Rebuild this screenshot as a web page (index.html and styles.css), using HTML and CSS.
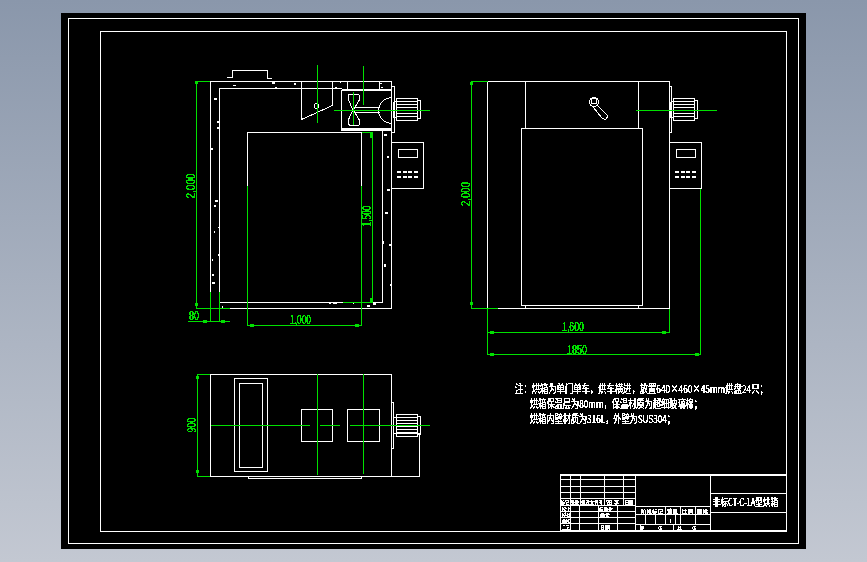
FILE: index.html
```html
<!DOCTYPE html>
<html lang="zh">
<head>
<meta charset="utf-8">
<title>CAD drawing</title>
<link rel="stylesheet" href="styles.css">
</head>
<body>
<main class="sheet">
<svg class="cad" viewBox="61 13 745 536" width="745" height="536" xmlns="http://www.w3.org/2000/svg">
  <defs>
    <filter id="alias" filterUnits="userSpaceOnUse" x="61" y="13" width="745" height="536">
      <feComponentTransfer><feFuncA type="discrete" tableValues="0 1 1 1"/></feComponentTransfer>
    </filter>
    <g id="motor">
      <path d="M.5 .5H21.5V22.5H.5ZM21.5 2.5H24V20.5H21.5ZM.5 3.5H21.5M.5 6.5H21.5M.5 9.5H21.5M.5 12.5H21.5M.5 15.5H21.5M.5 18.5H21.5M-2.5 3.5H.5M-2.5 19.5H.5M-2.5 3.5V19.5"/>
    </g>
    <g id="panel">
      <path d="M.5 .5H32V46.5H.5ZM7 7.5H26V15.5H7Z"/>
      <path class="keys" d="M6 30H10M11.5 30H15.5M17 30H21M22.5 30H26.5M6 35H10M11.5 35H15.5M17 35H21M22.5 35H26.5"/>
    </g>
  </defs>

  <!-- sheet frames -->
  <path class="w" d="M68.5 18.5H798.5V543.5H68.5ZM100.5 31.5H786.5V531.5H100.5Z"/>

  <!-- front section -->
  <g class="w">
    <path d="M227 77.5H232.5V70.5H267.5V78.5H272"/>
    <path d="M210.5 81.5H391.5V308.5H210.5Z"/>
    <path d="M341.5 88.5H219.5V302.5H382.5V130.5"/>
    <path d="M247.5 186V132.5H361.5V186"/>
    <path d="M301.5 81.5V119.5L332.5 105.5V81.5M347.5 81.5V89M379.5 81.5V89"/>
    <circle cx="316.5" cy="106" r="2.5"/>
    <path d="M341.5 89.5V130.5H391.5"/>
    <path class="thick" d="M341.5 89.5H391M341.5 128.5H391"/>
    <path d="M353 110C350 103 347 99 348.5 95Q349 94 351 94H358Q360 95 360 98C359 102 356 105 353 110C350 116 347 120 348.5 124Q349 125.500 351 125.500H358Q360 125 360 122C359 118 356 115 353 110ZM353 107.500H379.500M353 112.500H379.500"/>
    <path d="M392.500 97.500A14 13 0 0 0 392.500 123.500"/>
    <path d="M391.500 86.500H394V132H391.500"/>
    <use href="#motor" x="396" y="98"/>
    <use href="#panel" x="391" y="142"/>
    <path class="dots" d="M272 83h3M233 85.500h3M294 84h2M275 87.500h2M340 82h1M335 87.500h2M380 83.500h2M381 87.500h2M214 99h3M218 121v2M218 127v2M212 148v2M384 135h3M388 156v2M388 190h2M215 201h3M214 206h2M387 190h2M385 213h3M218 227.500h2M214 232h1M383 241v3M389 245h2M218 255h2M212 260h1M385 264v3M212 275h2M212 283h3M390 285h1M329 303h2M333 303h4M353 303h1M373 304h3M367 306h3M222 307h1"/>
  </g>

  <!-- side elevation -->
  <g class="w">
    <path d="M487.500 81.500H669.500V308.500H487.500Z"/>
    <path d="M525.500 81.500V128.500M638.500 81.500V128.500M525.500 305.500V308.500M638.500 305.500V308.500"/>
    <path d="M521.500 128.500H642.500V305.500H521.500Z"/>
    <circle cx="594" cy="102" r="4.500"/>
    <circle cx="594" cy="101" r="3"/>
    <path d="M597 105L607 115Q608 118 605 119.500L602 118L593 107"/>
    <path d="M670 86.500H671.500V132H670"/>
    <use href="#motor" x="673" y="98"/>
    <use href="#panel" x="669" y="142"/>
  </g>

  <!-- plan -->
  <g class="w">
    <path d="M210.500 374.500H391.500V476.500H210.500Z"/>
    <path d="M234.500 378.500H267.500V471.500H234.500ZM239.500 383.500H262.500V467.500H239.500Z"/>
    <path d="M301.500 409.500H332.500V441.500H301.500ZM347.500 409.500H379.500V441.500H347.500Z"/>
    <path d="M248.500 476.500V478.500H361.500V476.500"/>
    <path d="M391.500 402.500H393.500V448.500H391.500"/>
    <use href="#motor" x="396" y="414"/>
    <path d="M393.500 433.500H419.500V476.500H391.500"/>
  </g>

  <!-- green centre lines and dimensions -->
  <g class="g">
    <path d="M317.500 65V123M363.500 66V105M334 110.500H430M353.500 92V125"/>
    <path d="M247.500 186V325.500M361.500 186V325.500M247.500 325.500H361.500"/>
    <path d="M361.500 132.500H372.500V302.500H343"/>
    <path d="M210 81.500H196.500V308.500H230"/>
    <path d="M188 321.500H230M210.500 292V321.500M219.500 292V321.500"/>
    <path d="M487.500 81.500H471.500V308.500H498"/>
    <path d="M487.500 308.500V354.500H700.500V188.500M487.500 332.500H669.500V308.500"/>
    <path d="M636 110.500H717"/>
    <path d="M210 374.500H197.500V476.500H210"/>
    <path d="M210.500 425.500H310M320 425.500H340M350 425.500H430M317.500 374V475M363.500 374V474"/>
    <path class="ticks" d="M195 82.500h3M195 304.500h3M371 133v5M371 298v4M250 325.500h4M355 325.500h4M203 321.500h4M221 321.500h4M470 83h3M470 303h3M490 332.500h4M662 332.500h4M490 354.500h4M695 354.500h4M196 377h3M196 471h3"/>
  </g>

  <g class="dim" filter="url(#alias)">
    <text class="v" transform="translate(195 186) rotate(-90)" textLength="25" lengthAdjust="spacingAndGlyphs">2,000</text>
    <text class="v" transform="translate(371 216) rotate(-90)" textLength="21" lengthAdjust="spacingAndGlyphs">1,500</text>
    <text class="v" transform="translate(470 194) rotate(-90)" textLength="24" lengthAdjust="spacingAndGlyphs">2,000</text>
    <text class="v" transform="translate(196 425) rotate(-90)" textLength="15" lengthAdjust="spacingAndGlyphs">900</text>
    <text x="290" y="324" textLength="21" lengthAdjust="spacingAndGlyphs">1,000</text>
    <text x="189" y="320" textLength="10" lengthAdjust="spacingAndGlyphs">80</text>
    <text x="562" y="331" textLength="22" lengthAdjust="spacingAndGlyphs">1,600</text>
    <text x="567" y="354" textLength="20" lengthAdjust="spacingAndGlyphs">1850</text>
  </g>

  <g class="note" filter="url(#alias)">
    <text transform="translate(515 393) scale(.8 1)" textLength="316" lengthAdjust="spacingAndGlyphs">注：烘箱为单门单车，烘车横进，放置640×460×45mm烘盘24只；</text>
    <text x="530" y="408" textLength="172" lengthAdjust="spacingAndGlyphs">烘箱保温层为80mm，保温材质为超细玻璃棉；</text>
    <text x="530" y="423" textLength="145" lengthAdjust="spacingAndGlyphs">烘箱内壁材质为316L，外壁为SUS304；</text>
  </g>

  <!-- title block -->
  <g class="w">
    <path class="thick" d="M560 474.500H786M560 530.500H786"/>
    <path d="M560.500 474.500V530.500M710.500 474.500V530.500M635.500 474.500V530.500"/>
    <path d="M560.500 479.500H635.500M560.500 486.500H635.500M560.500 492.500H635.500M560.500 498.500H635.500M560.500 505.500H635.500M560.500 511.500H635.500M560.500 517.500H635.500M560.500 523.500H635.500"/>
    <path d="M570.500 474.500V530.500M580.500 474.500V505.500M604.500 474.500V505.500M623.500 474.500V505.500M579.500 505.500V530.500M598.500 505.500V530.500M617.500 505.500V530.500"/>
    <path d="M710.500 493.500H786M710.500 512.500H786"/>
    <path d="M635.500 506.500H710.500M635.500 514.500H710.500M635.500 524.500H710.500"/>
    <path d="M665.500 506.500V524.500M680.500 506.500V524.500M695.500 506.500V524.500M645.500 514.500V524.500M655.500 514.500V524.500M675.500 514.500V524.500M640.500 524.500V530.500M673.500 524.500V530.500"/>
  </g>

  <g class="tiny" filter="url(#alias)">
    <text x="561" y="503.500" textLength="8" lengthAdjust="spacingAndGlyphs">标记</text>
    <text x="571" y="503.500" textLength="8" lengthAdjust="spacingAndGlyphs">处数</text>
    <text x="581" y="503.500" textLength="22" lengthAdjust="spacingAndGlyphs">更改文件号</text>
    <text x="606" y="503.500" textLength="14" lengthAdjust="spacingAndGlyphs">签字</text>
    <text x="625" y="503.500" textLength="8" lengthAdjust="spacingAndGlyphs">日期</text>
    <text x="562" y="510.500" textLength="8" lengthAdjust="spacingAndGlyphs">设计</text>
    <text x="562" y="516.500" textLength="8" lengthAdjust="spacingAndGlyphs">校对</text>
    <text x="562" y="522.500" textLength="8" lengthAdjust="spacingAndGlyphs">审核</text>
    <text x="562" y="529" textLength="8" lengthAdjust="spacingAndGlyphs">工艺</text>
    <text x="599" y="510.500" textLength="14" lengthAdjust="spacingAndGlyphs">标准化</text>
    <text x="600" y="516.500" textLength="10" lengthAdjust="spacingAndGlyphs">审定</text>
    <text x="600" y="529" textLength="10" lengthAdjust="spacingAndGlyphs">日期</text>
    <text x="641" y="513" textLength="22" lengthAdjust="spacingAndGlyphs">阶段标记</text>
    <text x="667" y="513" textLength="11" lengthAdjust="spacingAndGlyphs">重量</text>
    <text x="682" y="513" textLength="11" lengthAdjust="spacingAndGlyphs">比例</text>
    <text x="697" y="513" textLength="11" lengthAdjust="spacingAndGlyphs">图幅</text>
    <text x="669" y="523" textLength="3" lengthAdjust="spacingAndGlyphs">1</text>
    <text x="640" y="530" textLength="4" lengthAdjust="spacingAndGlyphs">第</text>
    <text x="658" y="530" textLength="4" lengthAdjust="spacingAndGlyphs">张</text>
    <text x="677" y="530" textLength="5" lengthAdjust="spacingAndGlyphs">共</text>
    <text x="692" y="530" textLength="4" lengthAdjust="spacingAndGlyphs">张</text>
  </g>
  <text class="title" filter="url(#alias)" x="713" y="506" textLength="65" lengthAdjust="spacingAndGlyphs">非标CT-C-1A型烘箱</text>
</svg>
</main>
</body>
</html>
```
FILE: styles.css
```css
html, body {
  margin: 0;
  height: 100%;
}
body {
  box-sizing: border-box;
  padding: 13px 61px 0;
  overflow: hidden;
  background: linear-gradient(180deg, #8a97ab 0%, #c3c8d2 100%);
}
.sheet {
  width: 745px;
  height: 536px;
  background: #000;
}
.cad {
  display: block;
  shape-rendering: crispEdges;
}
.w, .w use {
  fill: none;
  stroke: #fff;
  stroke-width: 1;
}
#motor, #panel {
  fill: none;
  stroke: #fff;
  stroke-width: 1;
}
.keys {
  stroke-width: 2;
}
.thick {
  stroke-width: 2;
}
.dots {
  stroke-width: 1.5;
}
.g {
  fill: none;
  stroke: #00e000;
  stroke-width: 1;
}
.ticks {
  stroke-width: 3;
}
.dim text {
  fill: #00e000;
  font-family: "Liberation Sans", sans-serif;
  font-size: 12px;
}
.dim .v {
  text-anchor: middle;
}
.note text {
  fill: #fff;
  font-family: "Noto Sans CJK SC", "Noto Sans", sans-serif;
  font-size: 11px;
}
.tiny text {
  fill: #fff;
  font-family: "Noto Sans CJK SC", "Noto Sans", sans-serif;
  font-size: 4.5px;
}
.title {
  fill: #fff;
  font-family: "Noto Sans CJK SC", "Noto Sans", sans-serif;
  font-size: 10px;
}
```
